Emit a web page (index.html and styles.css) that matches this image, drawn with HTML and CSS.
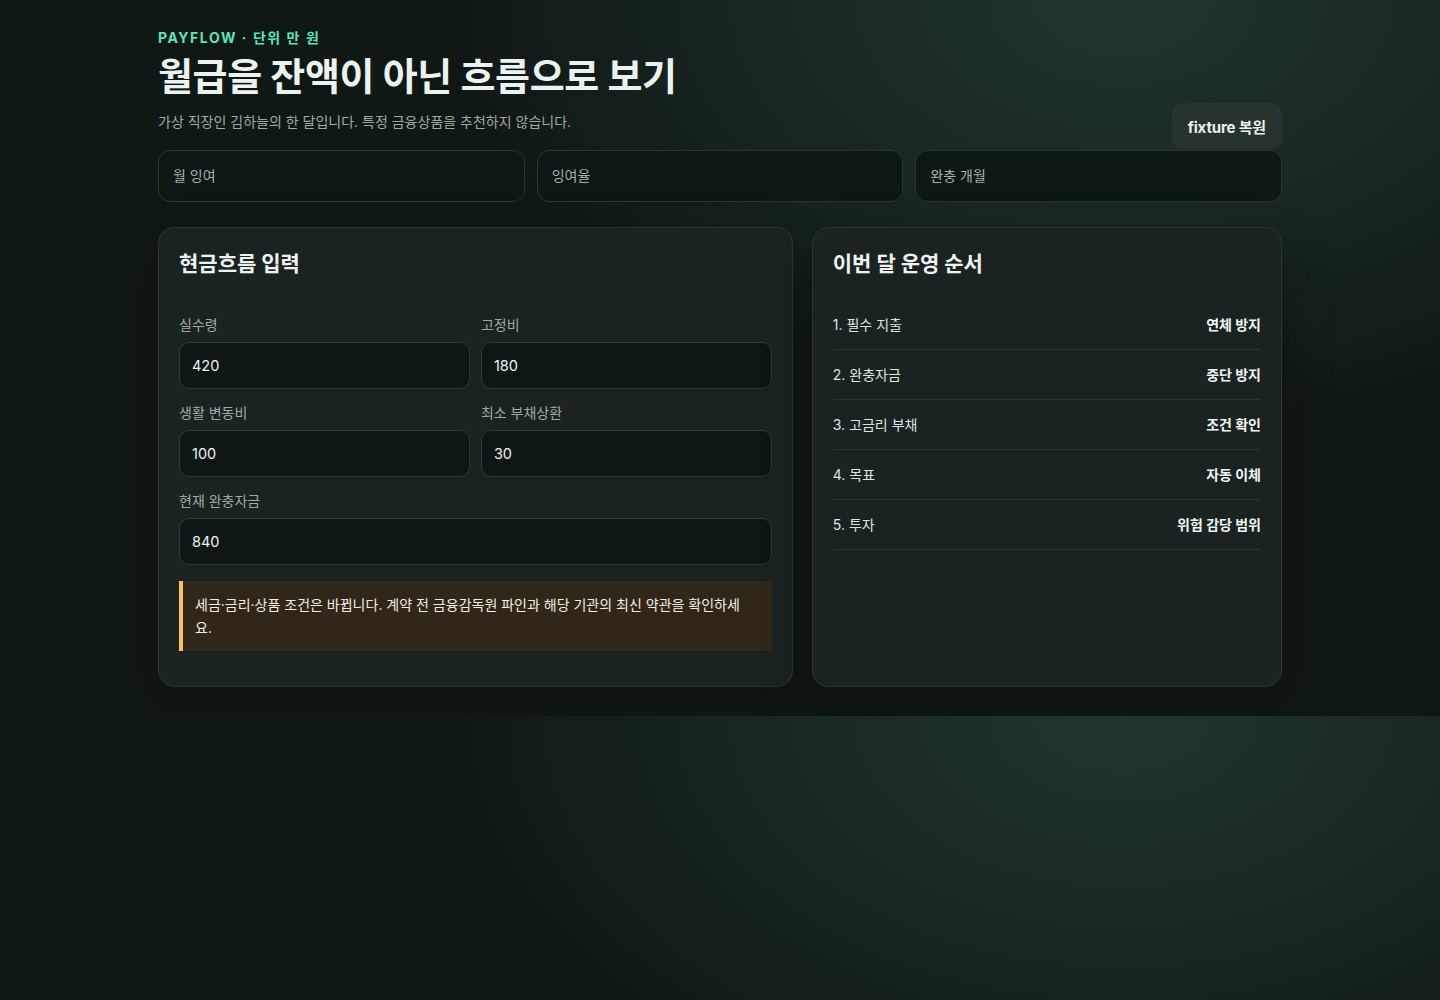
FILE: index.html
```html
<!DOCTYPE html>
<html lang="ko">
<head>
<meta charset="utf-8">
<title>PAYFLOW</title>
<link rel="stylesheet" href="styles.css">
</head>
<body>
<main class="page">
  <header class="header">
    <div class="header-text">
      <div class="eyebrow">PAYFLOW · 단위 만 원</div>
      <h1 class="title">월급을 잔액이 아닌 흐름으로 보기</h1>
      <p class="subtitle">가상 직장인 김하늘의 한 달입니다. 특정 금융상품을 추천하지 않습니다.</p>
    </div>
    <button class="restore-btn" type="button">fixture 복원</button>
  </header>

  <section class="stats">
    <div class="stat"><span class="stat-label">월 잉여</span></div>
    <div class="stat"><span class="stat-label">잉여율</span></div>
    <div class="stat"><span class="stat-label">완충 개월</span></div>
  </section>

  <section class="layout">
    <div class="card">
      <h2 class="card-title">현금흐름 입력</h2>
      <div class="form">
        <label class="field">
          <span class="field-label">실수령</span>
          <input class="field-input" type="text" value="420">
        </label>
        <label class="field">
          <span class="field-label">고정비</span>
          <input class="field-input" type="text" value="180">
        </label>
        <label class="field">
          <span class="field-label">생활 변동비</span>
          <input class="field-input" type="text" value="100">
        </label>
        <label class="field">
          <span class="field-label">최소 부채상환</span>
          <input class="field-input" type="text" value="30">
        </label>
        <label class="field field-wide">
          <span class="field-label">현재 완충자금</span>
          <input class="field-input" type="text" value="840">
        </label>
      </div>
      <div class="notice">세금·금리·상품 조건은 바뀝니다. 계약 전 금융감독원 파인과 해당 기관의 최신 약관을 확인하세요.</div>
    </div>

    <div class="card">
      <h2 class="card-title">이번 달 운영 순서</h2>
      <ul class="steps">
        <li class="step"><span class="step-name">1. 필수 지출</span><strong class="step-tag">연체 방지</strong></li>
        <li class="step"><span class="step-name">2. 완충자금</span><strong class="step-tag">중단 방지</strong></li>
        <li class="step"><span class="step-name">3. 고금리 부채</span><strong class="step-tag">조건 확인</strong></li>
        <li class="step"><span class="step-name">4. 목표</span><strong class="step-tag">자동 이체</strong></li>
        <li class="step"><span class="step-name">5. 투자</span><strong class="step-tag">위험 감당 범위</strong></li>
      </ul>
    </div>
  </section>
</main>
</body>
</html>
```

FILE: styles.css
```css
* {
  box-sizing: border-box;
}

body {
  margin: 0;
  font-family: "Inter", "Noto Sans CJK KR", sans-serif;
  color: #e8efec;
  background-color: #101816;
  background-image: radial-gradient(ellipse at 78% 0%, #21352f 0%, #1a2a26 18%, #101816 42%);
}

.page {
  max-width: 1124px;
  margin: 0 auto;
  padding: 28px 0 29px;
}

.header {
  display: flex;
  justify-content: space-between;
  align-items: flex-end;
}

.eyebrow {
  font-size: 14px;
  line-height: 20px;
  font-weight: 700;
  letter-spacing: 0.11em;
  color: #5fe3b6;
}

.title {
  margin: 4px 0 0;
  font-size: 38px;
  line-height: 48px;
  font-weight: 700;
  letter-spacing: -0.01em;
  color: #ecf2ef;
}

.subtitle {
  margin: 12px 0 17px;
  font-size: 14px;
  line-height: 20px;
  color: #9eaaa6;
}

.restore-btn {
  height: 46px;
  padding: 0 16px;
  border: none;
  border-radius: 10px;
  background: #26332f;
  color: #eaf0ed;
  font-family: "Inter", "Noto Sans CJK KR", sans-serif;
  font-size: 15px;
  font-weight: 700;
  letter-spacing: -0.01em;
}

.stats {
  margin-top: 1px;
  display: grid;
  grid-template-columns: repeat(3, 1fr);
  gap: 12px;
}

.stat {
  height: 52px;
  padding: 0 14px;
  display: flex;
  align-items: center;
  background: #0f1716;
  border: 1px solid #2a3634;
  border-radius: 12px;
}

.stat-label {
  font-size: 14px;
  line-height: 20px;
  color: #a6b1ad;
}

.layout {
  margin-top: 25px;
  display: grid;
  grid-template-columns: minmax(0, 1.35fr) minmax(0, 1fr);
  gap: 19px;
}

.card {
  padding: 22px 20px 35px;
  background: #1a2321;
  border: 1px solid #2a3634;
  border-radius: 16px;
  box-shadow: 0 22px 50px rgba(0, 0, 0, 0.28);
}

.card-title {
  margin: 0;
  font-size: 21px;
  line-height: 28px;
  font-weight: 700;
  color: #eef3f1;
}

.form {
  margin-top: 36px;
  display: grid;
  grid-template-columns: 1fr 1fr;
  column-gap: 11px;
  row-gap: 13px;
}

.field {
  display: flex;
  flex-direction: column;
  gap: 7px;
}

.field-wide {
  grid-column: 1 / -1;
}

.field-label {
  font-size: 14px;
  line-height: 21px;
  color: #9eaaa6;
}

.field-input {
  width: 100%;
  height: 47px;
  padding: 0 12px;
  background: #0f1716;
  border: 1px solid #2c3a37;
  border-radius: 10px;
  color: #eef3f1;
  font-family: "Inter", "Noto Sans CJK KR", sans-serif;
  font-size: 14.5px;
  outline: none;
}

.notice {
  margin-top: 16px;
  padding: 12px 20px 12px 12px;
  background: #302719;
  border-left: 4px solid #f5c268;
  font-size: 14px;
  line-height: 23px;
  color: #f1ede4;
}

.steps {
  margin: 22px 0 0;
  padding: 0;
  list-style: none;
}

.step {
  display: flex;
  justify-content: space-between;
  align-items: center;
  padding: 14px 0;
  border-bottom: 1px solid #2a3634;
  font-size: 14px;
  line-height: 21px;
}

.step-name {
  color: #dde5e2;
}

.step-tag {
  font-weight: 700;
  color: #f0f4f2;
}
```
